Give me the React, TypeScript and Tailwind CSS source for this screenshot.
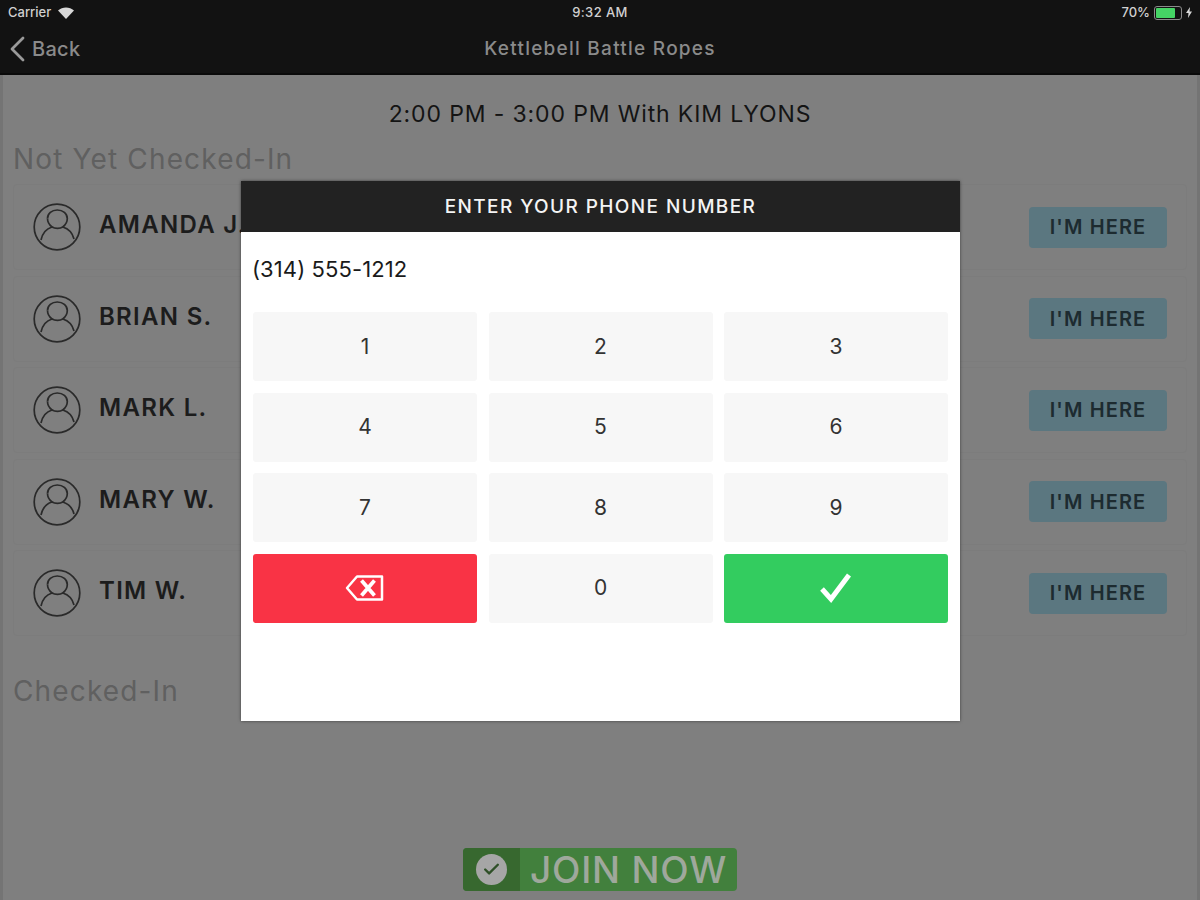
import React from 'react';
import { Check } from 'lucide-react';

const students = ['AMANDA J.', 'BRIAN S.', 'MARK L.', 'MARY W.', 'TIM W.'];
const keys = ['1', '2', '3', '4', '5', '6', '7', '8', '9'];

const font = "font-['Inter','Liberation_Sans',sans-serif]";

function UserIcon() {
  return (
    <svg width="48" height="48" viewBox="0 0 48 48" fill="none" stroke="#2a2a2a" strokeWidth="1.700" className="shrink-0">
      <circle cx="24" cy="24" r="22.800" />
      <path d="M14.500 15.500c0-4.800 4.200-8.500 9.800-8.500s10 3.700 10 8.500c0 3.500-2 6.500-4.500 8.500" />
      <path d="M14.500 15.500c0 3.500 2 6.500 4.500 8.500-5 1.500-9.500 6-11 13" />
      <path d="M19 24c3 1.800 8 1.800 10.800 0 5 1.500 9.700 6 11.200 12" />
    </svg>
  );
}

function StudentRow({ name }: { name: string }) {
  return (
    <div className="flex h-[86px] items-center rounded-sm border border-[#7c7c7c] pl-[19px] pr-[19px]">
      <UserIcon />
      <span className="mb-[4px] ml-[18px] text-[24px] font-semibold tracking-[1.300px] text-[#1c1c1c]">{name}</span>
      <button className="ml-auto h-[41px] w-[138px] rounded-[4px] bg-[#5b7780] text-[20px] font-semibold tracking-[1.100px] text-[#1d2b30]">
        I'M HERE
      </button>
    </div>
  );
}

function BackspaceIcon() {
  return (
    <svg width="40" height="28" viewBox="0 0 40 28" fill="none" stroke="#fff" strokeWidth="2.500" strokeLinejoin="round">
      <path d="M12 2.500h25v23H12L2 14z" />
      <path d="M16.500 6.500l13 15M29.500 6.500l-13 15" strokeWidth="3.800" />
    </svg>
  );
}

export default function App() {
  return (
    <div className={`relative flex h-[900px] w-[1200px] flex-col overflow-hidden bg-[#7f7f7f] ${font}`}>
      <header className="h-[75px] shrink-0 border-b-2 border-[#0a0a0a] bg-[#121212]">
        <div className="grid h-[25px] grid-cols-3 items-center px-2 text-[13px] font-medium text-[#d0d0d0]">
          <div className="flex items-center gap-[7px]">
            <span>Carrier</span>
            <svg width="16" height="12" viewBox="0 0 16 12" fill="#d8d8d8">
              <path d="M8 12 0 3.500C4.500-.5 11.500-.5 16 3.500z" />
            </svg>
          </div>
          <span className="text-center tracking-[0.4px]">9:32 AM</span>
          <div className="flex items-center justify-end gap-[4px]">
            <span>70%</span>
            <div className="flex h-[14px] w-[28px] items-center rounded-[3px] border border-[#8a8a8a] p-[1px]">
              <div className="h-full w-[19px] rounded-[1px] bg-[#45d465]" />
            </div>
            <svg width="6" height="11" viewBox="0 0 6 11" fill="#d8d8d8">
              <path d="M4 0 0 6h2.500L2 11l4-6.500H3.500z" />
            </svg>
          </div>
        </div>
        <div className="relative flex h-[48px] items-center pl-[10px] text-[#8a8a8a]">
          <svg width="15" height="26" viewBox="0 0 15 26" fill="none" stroke="#9a9a9a" strokeWidth="2.800" strokeLinecap="round" strokeLinejoin="round">
            <path d="M13 2 2 13l11 11" />
          </svg>
          <span className="ml-[7px] text-[20px] font-medium tracking-[0.3px]">Back</span>
          <span className="absolute inset-x-0 top-[10px] text-center text-[19px] font-medium tracking-[1.250px]">Kettlebell Battle Ropes</span>
        </div>
      </header>

      <main className="flex flex-1 flex-col border-x-[3px] border-[#747474] px-[10px]">
        <p className="mt-[26px] text-center text-[23px] leading-[26px] tracking-[0.870px] text-[#141414]">
          2:00 PM - 3:00 PM With KIM LYONS
        </p>
        <h2 className="mt-[15px] text-[28px] leading-[34px] tracking-[1.150px] text-[#606060]">Not Yet Checked-In</h2>
        <div className="mt-[8px] flex flex-col gap-[5.500px]">
          {students.map((name) => (
            <StudentRow key={name} name={name} />
          ))}
        </div>
        <h2 className="mt-[38px] text-[28px] leading-[34px] tracking-[1.150px] text-[#606060]">Checked-In</h2>
        <div className="mt-[140px] flex justify-center">
          <div className="flex h-[43px] w-[274px] overflow-hidden rounded-[4px] bg-[#42803d]">
            <div className="flex w-[57px] items-center justify-center bg-[#37682f]">
              <span className="flex h-[31px] w-[31px] items-center justify-center rounded-full bg-[#a6a6a6]">
                <Check size={19} strokeWidth={3} className="text-[#2f5028]" />
              </span>
            </div>
            <span className="flex-1 text-center text-[37px] font-medium leading-[43px] tracking-[0.800px] text-[#9fa89c]">JOIN NOW</span>
          </div>
        </div>
      </main>

      {/* Phone number dialog */}
      <div className="absolute left-[241px] top-[181px] flex h-[540px] w-[719px] flex-col bg-white shadow-[0_0_3px_rgba(0,0,0,0.5)]">
        <div className="flex h-[51px] items-center justify-center bg-[#222222] pt-[2px] text-[19px] font-medium tracking-[1.400px] text-[#f4f4f4]">
          ENTER YOUR PHONE NUMBER
        </div>
        <div className="pl-[11px] pt-[23px] text-[22px] leading-[28px] tracking-[0.100px] text-[#1a1a1a]">(314) 555-1212</div>
        <div className="mt-[29px] grid grid-cols-3 gap-[11.500px] px-[12px]">
          {keys.map((k) => (
            <div key={k} className="flex h-[69px] items-center justify-center rounded-[3px] bg-[#f7f7f7] text-[21px] text-[#333]">
              {k}
            </div>
          ))}
          <div className="flex h-[69px] items-center justify-center rounded-[3px] bg-[#f93345]">
            <BackspaceIcon />
          </div>
          <div className="flex h-[69px] items-center justify-center rounded-[3px] bg-[#f7f7f7] text-[21px] text-[#333]">0</div>
          <div className="flex h-[69px] items-center justify-center rounded-[3px] bg-[#33cc5f]">
            <svg width="32" height="30" viewBox="0 0 32 30" fill="none" stroke="#fff" strokeWidth="5">
              <path d="M2 16l9 10L29 2" />
            </svg>
          </div>
        </div>
      </div>
    </div>
  );
}
